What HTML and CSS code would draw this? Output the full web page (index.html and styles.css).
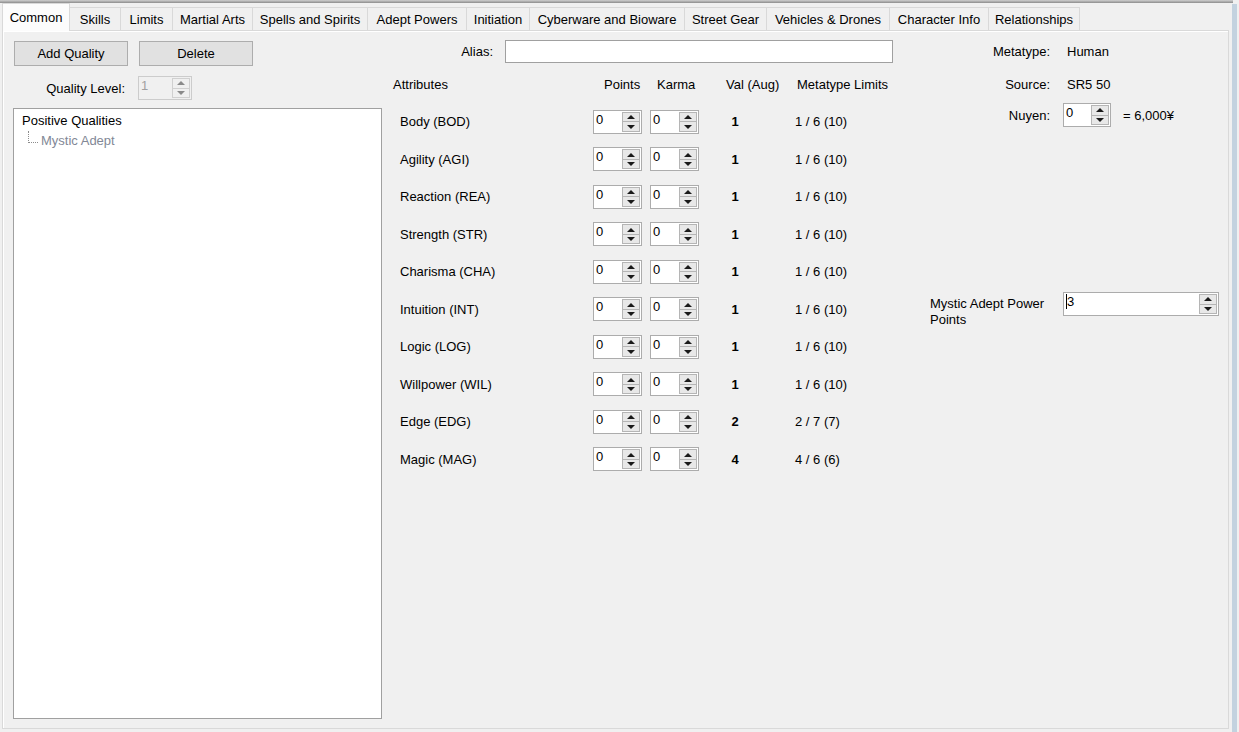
FILE: index.html
```html
<!DOCTYPE html>
<html lang="en">
<head>
  <meta charset="UTF-8" />
  <title>Chummer - Common</title>
  <link rel="stylesheet" href="styles.css">
</head>
<body>
  <div class="top-line"></div>
  <div class="frame">
    <div class="main">
      <div class="tabs">
        <div class="tab active">Common</div>
        <div class="tab">Skills</div>
        <div class="tab">Limits</div>
        <div class="tab">Martial Arts</div>
        <div class="tab">Spells and Spirits</div>
        <div class="tab">Adept Powers</div>
        <div class="tab">Initiation</div>
        <div class="tab">Cyberware and Bioware</div>
        <div class="tab">Street Gear</div>
        <div class="tab">Vehicles &amp; Drones</div>
        <div class="tab">Character Info</div>
        <div class="tab">Relationships</div>
      </div>

      <div class="page">
        <!-- qualities -->
        <div class="col-left">
          <div class="btn-row">
            <button class="btn">Add Quality</button>
            <button class="btn">Delete</button>
          </div>
          <div class="level-row">
            <span class="level-label">Quality Level:</span>
            <div class="spin spin-level disabled">
              <span class="spin-val">1</span>
              <div class="spin-btns"><span class="up"></span><span class="down"></span></div>
            </div>
          </div>
          <div class="tree">
            <div class="node">Positive Qualities</div>
            <div class="node child">Mystic Adept</div>
          </div>
        </div>

        <!-- attributes -->
        <div class="col-mid">
          <div class="alias-row">
            <span class="alias-label">Alias:</span>
            <div class="textbox"></div>
          </div>
          <div class="head-row">
            <span class="h-attr">Attributes</span>
            <span class="h-points">Points</span>
            <span class="h-karma">Karma</span>
            <span class="h-val">Val (Aug)</span>
            <span class="h-limits">Metatype Limits</span>
          </div>
          <div class="attr-list">
            <div class="attr-row">
              <span class="attr-name">Body (BOD)</span>
              <div class="spin"><span class="spin-val">0</span><div class="spin-btns"><span class="up"></span><span class="down"></span></div></div>
              <div class="spin"><span class="spin-val">0</span><div class="spin-btns"><span class="up"></span><span class="down"></span></div></div>
              <span class="attr-val">1</span>
              <span class="attr-limit">1 / 6 (10)</span>
            </div>
            <div class="attr-row">
              <span class="attr-name">Agility (AGI)</span>
              <div class="spin"><span class="spin-val">0</span><div class="spin-btns"><span class="up"></span><span class="down"></span></div></div>
              <div class="spin"><span class="spin-val">0</span><div class="spin-btns"><span class="up"></span><span class="down"></span></div></div>
              <span class="attr-val">1</span>
              <span class="attr-limit">1 / 6 (10)</span>
            </div>
            <div class="attr-row">
              <span class="attr-name">Reaction (REA)</span>
              <div class="spin"><span class="spin-val">0</span><div class="spin-btns"><span class="up"></span><span class="down"></span></div></div>
              <div class="spin"><span class="spin-val">0</span><div class="spin-btns"><span class="up"></span><span class="down"></span></div></div>
              <span class="attr-val">1</span>
              <span class="attr-limit">1 / 6 (10)</span>
            </div>
            <div class="attr-row">
              <span class="attr-name">Strength (STR)</span>
              <div class="spin"><span class="spin-val">0</span><div class="spin-btns"><span class="up"></span><span class="down"></span></div></div>
              <div class="spin"><span class="spin-val">0</span><div class="spin-btns"><span class="up"></span><span class="down"></span></div></div>
              <span class="attr-val">1</span>
              <span class="attr-limit">1 / 6 (10)</span>
            </div>
            <div class="attr-row">
              <span class="attr-name">Charisma (CHA)</span>
              <div class="spin"><span class="spin-val">0</span><div class="spin-btns"><span class="up"></span><span class="down"></span></div></div>
              <div class="spin"><span class="spin-val">0</span><div class="spin-btns"><span class="up"></span><span class="down"></span></div></div>
              <span class="attr-val">1</span>
              <span class="attr-limit">1 / 6 (10)</span>
            </div>
            <div class="attr-row">
              <span class="attr-name">Intuition (INT)</span>
              <div class="spin"><span class="spin-val">0</span><div class="spin-btns"><span class="up"></span><span class="down"></span></div></div>
              <div class="spin"><span class="spin-val">0</span><div class="spin-btns"><span class="up"></span><span class="down"></span></div></div>
              <span class="attr-val">1</span>
              <span class="attr-limit">1 / 6 (10)</span>
            </div>
            <div class="attr-row">
              <span class="attr-name">Logic (LOG)</span>
              <div class="spin"><span class="spin-val">0</span><div class="spin-btns"><span class="up"></span><span class="down"></span></div></div>
              <div class="spin"><span class="spin-val">0</span><div class="spin-btns"><span class="up"></span><span class="down"></span></div></div>
              <span class="attr-val">1</span>
              <span class="attr-limit">1 / 6 (10)</span>
            </div>
            <div class="attr-row">
              <span class="attr-name">Willpower (WIL)</span>
              <div class="spin"><span class="spin-val">0</span><div class="spin-btns"><span class="up"></span><span class="down"></span></div></div>
              <div class="spin"><span class="spin-val">0</span><div class="spin-btns"><span class="up"></span><span class="down"></span></div></div>
              <span class="attr-val">1</span>
              <span class="attr-limit">1 / 6 (10)</span>
            </div>
            <div class="attr-row">
              <span class="attr-name">Edge (EDG)</span>
              <div class="spin"><span class="spin-val">0</span><div class="spin-btns"><span class="up"></span><span class="down"></span></div></div>
              <div class="spin"><span class="spin-val">0</span><div class="spin-btns"><span class="up"></span><span class="down"></span></div></div>
              <span class="attr-val">2</span>
              <span class="attr-limit">2 / 7 (7)</span>
            </div>
            <div class="attr-row">
              <span class="attr-name">Magic (MAG)</span>
              <div class="spin"><span class="spin-val">0</span><div class="spin-btns"><span class="up"></span><span class="down"></span></div></div>
              <div class="spin"><span class="spin-val">0</span><div class="spin-btns"><span class="up"></span><span class="down"></span></div></div>
              <span class="attr-val">4</span>
              <span class="attr-limit">4 / 6 (6)</span>
            </div>
          </div>
        </div>

        <!-- metatype / nuyen -->
        <div class="col-right">
          <div class="info-row">
            <span class="info-label">Metatype:</span>
            <span class="info-value">Human</span>
          </div>
          <div class="info-row source">
            <span class="info-label">Source:</span>
            <span class="info-value">SR5 50</span>
          </div>
          <div class="info-row nuyen">
            <span class="info-label">Nuyen:</span>
            <div class="spin spin-nuyen"><span class="spin-val">0</span><div class="spin-btns"><span class="up"></span><span class="down"></span></div></div>
            <span class="nuyen-total">= 6,000¥</span>
          </div>
          <div class="pp-row">
            <span class="pp-label">Mystic Adept Power Points</span>
            <div class="spin spin-pp"><span class="spin-val"><span class="caret"></span>3</span><div class="spin-btns"><span class="up"></span><span class="down"></span></div></div>
          </div>
        </div>
      </div>
    </div>
    <div class="side-bar"></div>
  </div>
</body>
</html>
```

FILE: styles.css
```css
* {
  box-sizing: border-box;
}

body {
  margin: 0;
  width: 1239px;
  height: 732px;
  overflow: hidden;
  background: #f0f0f0;
  font-family: 'Liberation Sans', Arial, sans-serif;
  font-size: 13px;
  color: #000;
}

.top-line {
  height: 3px;
  background: linear-gradient(#d0d0d0, #8c8c8c);
  margin-right: 6px;
}

.frame {
  display: flex;
}

.main {
  width: 1232px;
}

.side-bar {
  width: 5px;
  height: 729px;
  margin-top: 1px;
  background: #c3d2df;
}

/* tab strip - fixed widths like the winforms tab headers */
.tabs {
  display: flex;
  align-items: flex-end;
  height: 27px;
  padding-left: 2px;
}

.tab {
  height: 23px;
  line-height: 23px;
  text-align: center;
  border: 1px solid #d9d9d9;
  border-bottom: none;
  border-left: none;
  background: #f0f0f0;
  white-space: nowrap;
}

.tab:nth-child(2) { width: 51px; }
.tab:nth-child(3) { width: 52px; }
.tab:nth-child(4) { width: 80px; }
.tab:nth-child(5) { width: 115px; }
.tab:nth-child(6) { width: 99px; }
.tab:nth-child(7) { width: 63px; }
.tab:nth-child(8) { width: 155px; }
.tab:nth-child(9) { width: 82px; }
.tab:nth-child(10) { width: 123px; }
.tab:nth-child(11) { width: 99px; }
.tab:nth-child(12) { width: 91px; }

.tab.active {
  width: 68px;
  height: 28px;
  margin-bottom: -1px;
  line-height: 27px;
  border-left: 1px solid #d9d9d9;
  background: #fcfcfc;
  position: relative;
  z-index: 1;
}

/* tab page */
.page {
  margin-left: 2px;
  width: 1227px;
  height: 699px;
  border: 1px solid #d9d9d9;
  box-shadow: inset 1px 1px 0 #fff;
  padding: 10px 0 0 10px;
  display: flex;
  align-items: flex-start;
}

.col-left {
  width: 369px;
}

.btn-row {
  display: flex;
  gap: 11px;
  padding-left: 1px;
}

.btn {
  width: 114px;
  height: 25px;
  background: #e1e1e1;
  border: 1px solid #adadad;
  font-family: inherit;
  font-size: 13px;
  padding: 0;
}

.level-row {
  display: flex;
  align-items: center;
  gap: 13px;
  margin-top: 10px;
  height: 24px;
}

.level-label {
  width: 112px;
  text-align: right;
}

.tree {
  margin-top: 8px;
  height: 611px;
  background: #fff;
  border: 1px solid #a0a0a0;
  padding: 2px 0 0 8px;
}

.node {
  line-height: 20px;
}

.node.child {
  padding-left: 19px;
  color: #828896;
  position: relative;
}

.node.child::before {
  content: '';
  position: absolute;
  left: 6px;
  top: 0;
  width: 9px;
  height: 11px;
  border-left: 1px dotted #8c8c8c;
  border-bottom: 1px dotted #8c8c8c;
}

/* spin boxes */
.spin {
  display: flex;
  width: 49px;
  height: 24px;
  background: #fff;
  border: 1px solid #acacac;
}

.spin-val {
  flex: 1;
  padding-left: 2px;
  line-height: 17px;
  display: flex;
  align-items: flex-start;
}

.spin-btns {
  width: 18px;
  margin: 1px 1px 1px 0;
  display: flex;
  flex-direction: column;
  border: 1px solid #b5b5b5;
  background: #e8e8e8;
}

.spin-btns span {
  flex: 1;
  display: flex;
  align-items: center;
  justify-content: center;
}

.spin-btns .up {
  border-bottom: 1px solid #b5b5b5;
}

.spin-btns .up::after,
.spin-btns .down::after {
  content: '';
  border-left: 4px solid transparent;
  border-right: 4px solid transparent;
}

.spin-btns .up::after {
  border-bottom: 4px solid #1a1a1a;
}

.spin-btns .down::after {
  border-top: 4px solid #1a1a1a;
}

.spin.disabled {
  background: #f0f0f0;
  border-color: #cccccc;
  color: #a0a0a0;
}

.spin.disabled .spin-btns {
  border-color: #d0d0d0;
  background: #f0f0f0;
}

.spin.disabled .spin-btns span {
  border-color: #d0d0d0;
}

.spin.disabled .spin-btns .up::after {
  border-bottom-color: #8a8a8a;
}

.spin.disabled .spin-btns .down::after {
  border-top-color: #8a8a8a;
}

.spin-level {
  width: 54px;
}

/* attributes */
.col-mid {
  width: 500px;
  margin-left: 11px;
}

.alias-row {
  display: flex;
  align-items: center;
  gap: 12px;
  margin-top: -1px;
  height: 23px;
}

.alias-label {
  width: 100px;
  text-align: right;
}

.textbox {
  width: 388px;
  height: 23px;
  background: #fff;
  border: 1px solid #a0a0a0;
}

.head-row {
  display: flex;
  margin-top: 14px;
  line-height: 16px;
}

.h-attr {
  width: 211px;
}

.h-points {
  width: 53px;
}

.h-karma {
  width: 69px;
}

.h-val {
  width: 71px;
}

.attr-list {
  margin-top: 10px;
  display: grid;
  grid-auto-rows: 37.5px;
}

.attr-row {
  display: flex;
  align-items: center;
  gap: 8px;
}

.attr-name {
  width: 192px;
  padding-left: 7px;
}

.attr-val {
  width: 72px;
  text-align: center;
  font-weight: bold;
  margin-left: -8px;
}

.attr-limit {
  margin-left: 16px;
}

/* right column */
.col-right {
  margin-left: 11px;
  width: 320px;
}

.info-row {
  display: flex;
  align-items: center;
  gap: 13px;
  height: 20px;
}

.info-label {
  width: 146px;
  text-align: right;
}

.info-value {
  padding-left: 4px;
}

.info-row.source {
  margin-top: 13px;
}

.info-row.nuyen {
  margin-top: 9px;
  height: 24px;
}

.spin-nuyen {
  width: 48px;
}

.nuyen-total {
  margin-left: -1px;
}

.pp-row {
  display: flex;
  align-items: flex-start;
  margin-top: 165px;
  padding-left: 26px;
}

.pp-label {
  width: 133px;
  line-height: 16px;
  margin-top: 4px;
}

.spin-pp {
  width: 156px;
}

.caret {
  width: 1px;
  height: 15px;
  margin-top: 1px;
  background: #000;
}
```
